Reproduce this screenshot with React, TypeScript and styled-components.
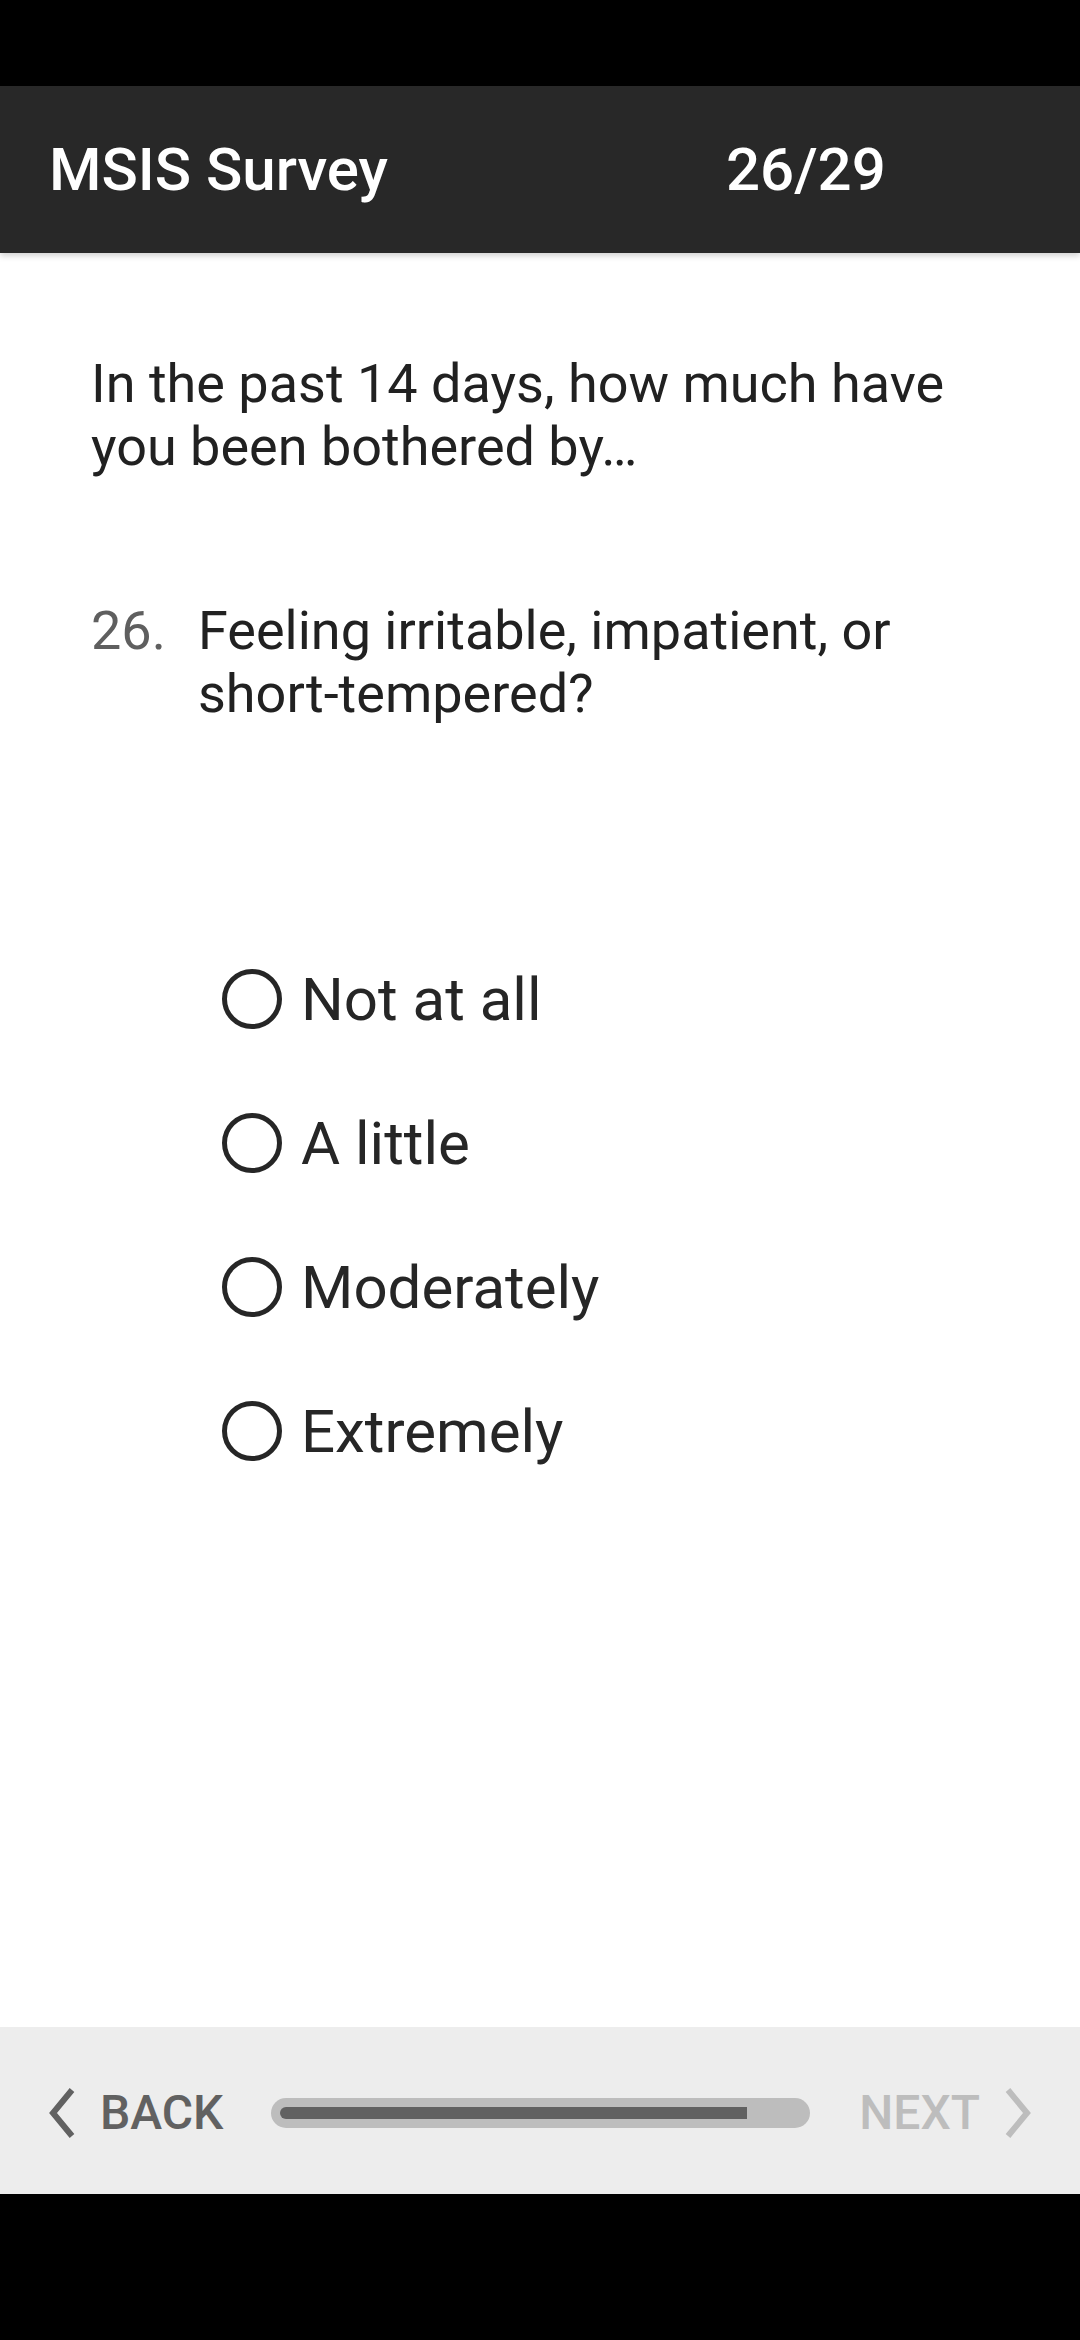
import React from "react";
import styled, { createGlobalStyle } from "styled-components";

const Global = createGlobalStyle`
  html, body { margin: 0; padding: 0; background: #000; }
  body { font-family: Roboto, "Noto Sans", Arial, sans-serif; }
  * { box-sizing: border-box; }
`;

const Screen = styled.div`
  width: 1080px;
  height: 2340px;
  display: flex;
  flex-direction: column;
  background: #fff;
`;

const StatusBar = styled.div`
  height: 86px;
  flex: none;
  background: #000;
`;

const Header = styled.header`
  height: 167px;
  flex: none;
  background: #282828;
  display: flex;
  align-items: center;
  padding: 0 0 0 49px;
  color: #fff;
  font-size: 60px;
  font-weight: 500;
  box-shadow: 0 3px 6px rgba(0, 0, 0, 0.18);
  position: relative;
  z-index: 1;
`;

const Title = styled.div`
  width: 677px;
`;

const Counter = styled.div``;

const Main = styled.main`
  flex: 1;
  display: flex;
  flex-direction: column;
  padding: 99px 91px 0 91px;
  color: #212121;
`;

const Intro = styled.p`
  margin: 0;
  font-size: 54px;
  line-height: 63px;
`;

const Question = styled.div`
  display: flex;
  margin-top: 121px;
  font-size: 54px;
  line-height: 63px;
`;

const QNum = styled.span`
  width: 107px;
  flex: none;
  color: #5f5f5f;
`;

const QText = styled.span``;

const Options = styled.div`
  display: flex;
  flex-direction: column;
  margin-top: 202px;
  padding-left: 131px;
`;

const Option = styled.label`
  height: 144px;
  display: flex;
  align-items: center;
  gap: 19px;
  font-size: 60px;
  color: #262626;
`;

const Radio = styled.span`
  width: 60px;
  height: 60px;
  border-radius: 50%;
  border: 5px solid #262626;
  flex: none;
`;

const BottomBar = styled.footer`
  height: 167px;
  flex: none;
  background: #ededed;
  display: flex;
  align-items: center;
  padding: 4px 49px 0;
  font-size: 48px;
  font-weight: 500;
`;

const NavButton = styled.div<{ $disabled?: boolean }>`
  display: flex;
  align-items: center;
  gap: 25px;
  color: ${(p) => (p.$disabled ? "#bdbdbd" : "#616161")};
`;

const Track = styled.div`
  width: 545px;
  height: 30px;
  margin: 0 49px 0 48px;
  border-radius: 15px;
  background: #bdbdbd;
  padding: 9px;
  display: flex;
`;

const Fill = styled.div`
  height: 12px;
  background: #616161;
  border-radius: 6px 0 0 6px;
`;

const NavBar = styled.div`
  height: 146px;
  flex: none;
  background: #000;
`;

const Chevron = ({ dir, color }: { dir: "left" | "right"; color: string }) => (
  <svg width="26" height="50" viewBox="0 0 26 50">
    <path
      d={dir === "left" ? "M23 2 L4 25 L23 48" : "M3 2 L22 25 L3 48"}
      fill="none"
      stroke={color}
      strokeWidth="6"
    />
  </svg>
);

const options = ["Not at all", "A little", "Moderately", "Extremely"];

export default function App() {
  const progress = 26 / 29;
  return (
    <>
      <Global />
      <Screen>
        <StatusBar />
        <Header>
          <Title>MSIS Survey</Title>
          <Counter>26/29</Counter>
        </Header>
        <Main>
          <Intro>In the past 14 days, how much have you been bothered by…</Intro>
          <Question>
            <QNum>26.</QNum>
            <QText>Feeling irritable, impatient, or short-tempered?</QText>
          </Question>
          <Options>
            {options.map((o) => (
              <Option key={o}>
                <Radio />
                {o}
              </Option>
            ))}
          </Options>
        </Main>
        <BottomBar>
          <NavButton>
            <Chevron dir="left" color="#616161" />
            BACK
          </NavButton>
          <Track>
            <Fill style={{ width: `${progress * 100}%` }} />
          </Track>
          <NavButton $disabled>
            NEXT
            <Chevron dir="right" color="#bdbdbd" />
          </NavButton>
        </BottomBar>
        <NavBar />
      </Screen>
    </>
  );
}
